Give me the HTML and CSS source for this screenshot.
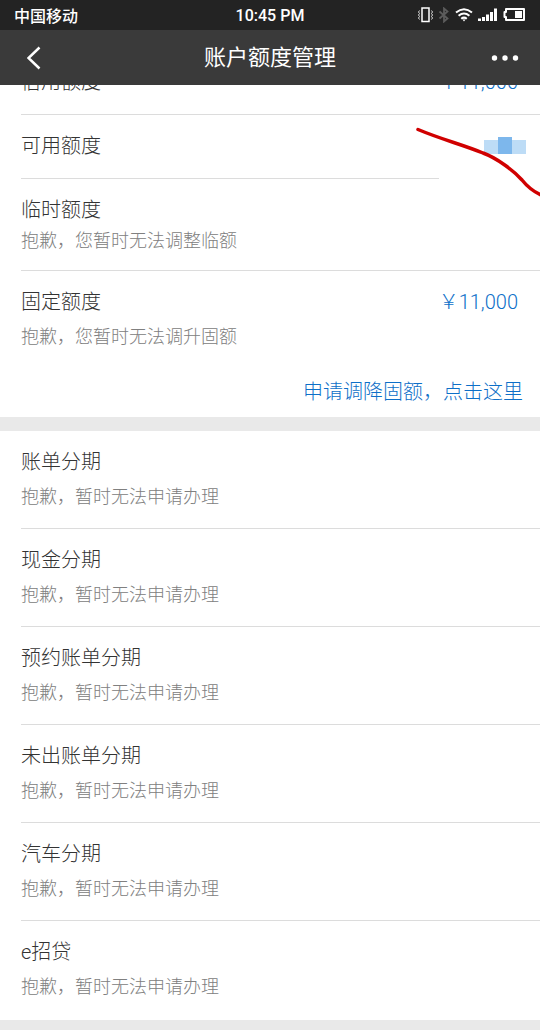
FILE: index.html
```html
<!DOCTYPE html>
<html lang="zh-CN">
<head>
    <meta charset="UTF-8">
    <meta name="viewport" content="width=device-width, initial-scale=1.0">
    <title>账户额度管理</title>
    <link rel="stylesheet" href="styles.css">
</head>
<body>
    <div class="status-bar">
        <span class="carrier">中国移动</span>
        <span class="clock">10:45 PM</span>
        <span class="status-icons">
            <svg width="108" height="16" viewBox="0 0 108 16" aria-hidden="true">
                <!-- vibrate -->
                <rect x="4" y="1" width="7" height="13.500" fill="none" stroke="#fff" stroke-width="1.500"/>
                <path d="M1.500 3.500l-1 1.500 1 1.500-1 1.500 1 1.500-1 1.500 1 1.500M13.500 3.500l1 1.500-1 1.500 1 1.500-1 1.500 1 1.500-1 1.500" fill="none" stroke="#ddd" stroke-width="1"/>
                <!-- bluetooth -->
                <path d="M21.500 4.500l8 7-3.500 3v-13l3.500 3-8 7" fill="none" stroke="#5c5c5c" stroke-width="1.800"/>
                <!-- wifi -->
                <path d="M38 5.500q8-6.500 16 0M40.600 8.700q5.400-4.400 10.800 0M43.200 11.700q2.800-2.200 5.600 0" fill="none" stroke="#fff" stroke-width="2"/>
                <path d="M44.500 12.500h3L46 14.500z" fill="#fff"/>
                <!-- signal -->
                <path d="M60 11.500h3V14h-3zM64 10h3v4h-3zM68 7.500h3V14h-3zM72 5h3v9h-3zM76 1.500h3V14h-3z" fill="#fff"/>
                <!-- battery -->
                <path d="M88 2h18v11H88V10h-1.500V5H88z" fill="none" stroke="#fff" stroke-width="2" stroke-linejoin="round"/>
                <rect x="97" y="4" width="7" height="7" fill="#fff"/>
            </svg>
        </span>
    </div>

    <header class="nav-bar">
        <button class="nav-btn back" type="button" aria-label="返回">
            <svg width="14" height="24" viewBox="0 0 14 24"><path d="M12.500 1.500L1.500 12l11 10.500" fill="none" stroke="#fff" stroke-width="2.500"/></svg>
        </button>
        <h1>账户额度管理</h1>
        <button class="nav-btn more" type="button" aria-label="更多">
            <svg width="28" height="6" viewBox="0 0 28 6" fill="#fff"><circle cx="3.500" cy="3" r="2.700"/><circle cx="14" cy="3" r="2.700"/><circle cx="24.500" cy="3" r="2.700"/></svg>
        </button>
    </header>

    <main>
        <ul class="list quota">
            <li class="row">
                <div class="line"><h2>信用额度</h2><span class="amount">￥11,000</span></div>
            </li>
            <li class="row masked">
                <div class="line">
                    <h2>可用额度</h2>
                    <svg class="mosaic" width="42" height="18" viewBox="0 0 42 18" aria-hidden="true">
                        <rect y="3" width="42" height="14" fill="#bddcf6"/>
                        <rect x="14" width="14" height="17" fill="#7db7ec"/>
                    </svg>
                </div>
                <svg class="scribble" width="125" height="72" viewBox="0 0 125 72" aria-hidden="true">
                    <path d="M3 3.500C28 14 46 18 68 27C82 32 99 45 107 54Q115 64 126 69" fill="none" stroke="#d00000" stroke-width="3.500" stroke-linecap="round"/>
                </svg>
            </li>
            <li class="row">
                <div class="line"><h2>临时额度</h2></div>
                <p>抱歉，您暂时无法调整临额</p>
            </li>
            <li class="row fixed-quota">
                <div class="line"><h2>固定额度</h2><span class="amount">￥11,000</span></div>
                <p>抱歉，您暂时无法调升固额</p>
                <a class="reduce" href="#">申请调降固额，点击这里</a>
            </li>
        </ul>

        <ul class="list services">
            <li class="row"><h2>账单分期</h2><p>抱歉，暂时无法申请办理</p></li>
            <li class="row"><h2>现金分期</h2><p>抱歉，暂时无法申请办理</p></li>
            <li class="row"><h2>预约账单分期</h2><p>抱歉，暂时无法申请办理</p></li>
            <li class="row"><h2>未出账单分期</h2><p>抱歉，暂时无法申请办理</p></li>
            <li class="row"><h2>汽车分期</h2><p>抱歉，暂时无法申请办理</p></li>
            <li class="row"><h2>e招贷</h2><p>抱歉，暂时无法申请办理</p></li>
        </ul>
    </main>
</body>
</html>
```

FILE: styles.css
```css
* {
    box-sizing: border-box;
}
body {
    margin: 0;
    min-height: 100vh;
    background: #e9e9e9;
    color: #333;
    font-family: Roboto, "Noto Sans CJK SC", sans-serif;
    font-weight: 300;
}
h1, h2, p, ul {
    margin: 0;
    padding: 0;
    font-weight: 300;
}

/* top bars */
.status-bar {
    display: grid;
    grid-template-columns: 1fr auto 1fr;
    align-items: center;
    height: 30px;
    padding: 0 14px;
    background: #232323;
    color: #fff;
    font-size: 16px;
    font-weight: 500;
}
.status-icons {
    display: flex;
    justify-content: flex-end;
}
.nav-bar {
    display: grid;
    grid-template-columns: 60px 1fr 60px;
    align-items: center;
    height: 55px;
    background: #3a3a3a;
    color: #fff;
}
.nav-bar h1 {
    font-size: 22px;
    font-weight: 400;
    line-height: 32px;
    text-align: center;
}
.nav-btn {
    display: flex;
    align-items: center;
    height: 55px;
    padding: 0;
    border: none;
    background: none;
    cursor: pointer;
}
.back {
    padding-left: 27px;
}
.more {
    justify-content: flex-end;
    padding-right: 21px;
}

/* lists */
main {
    overflow: hidden;
}
.list {
    padding-left: 21px;
    background: #fff;
    list-style: none;
}
.row {
    padding: 16px 0 17px;
    border-bottom: 1px solid #dcdcdc;
}
.row:last-child {
    border-bottom-color: transparent;
}
.row h2 {
    font-size: 20px;
    line-height: 30px;
}
.row p {
    margin-top: 4px;
    color: #808080;
    font-size: 18px;
    line-height: 24px;
}
.line {
    display: flex;
    align-items: center;
    justify-content: space-between;
}
.amount {
    padding-right: 22px;
    color: #0d6fc8;
    font-size: 20px;
    line-height: 30px;
}

/* scrolled partly under the title bar */
.quota {
    margin-top: -34px;
}
.masked {
    position: relative;
}
.masked::after {
    content: "";
    position: absolute;
    right: 0;
    bottom: -1px;
    width: 101px;
    height: 1px;
    background: #fff;
}
.mosaic {
    margin-right: 14px;
}
.scribble {
    position: absolute;
    z-index: 1;
    top: 11px;
    right: 0;
}
.fixed-quota {
    padding-bottom: 9px;
}
.fixed-quota p {
    margin-top: 8px;
}
.reduce {
    display: block;
    margin-top: 28px;
    padding-right: 17px;
    color: #0d6fc8;
    font-size: 20px;
    line-height: 30px;
    text-align: right;
    text-decoration: none;
}
.services {
    margin-top: 14px;
}
.services .row {
    padding-bottom: 19px;
}
.services .row:last-child {
    padding-bottom: 20px;
}
.services p {
    margin-top: 8px;
}
```
